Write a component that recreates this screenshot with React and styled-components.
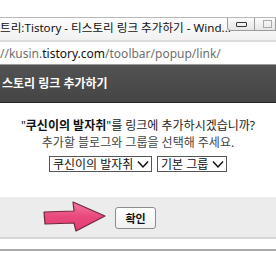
import React from 'react';
import styled, { createGlobalStyle } from 'styled-components';

const GlobalStyle = createGlobalStyle`
  html, body {
    margin: 0;
    padding: 0;
    background: #ffffff;
  }
  body {
    width: 276px;
    height: 260px;
    overflow: hidden;
    font-family: "Noto Sans", "Noto Sans CJK KR", sans-serif;
  }
`;

const Page = styled.div`
  display: flex;
  flex-direction: column;
  width: 276px;
  height: 260px;
  padding-top: 17px;
  box-sizing: border-box;
  background: #fff;
`;

const TitleBar = styled.div`
  display: flex;
  align-items: flex-start;
  height: 23px;
  border-top: 1px solid #b9b9b9;
  background: linear-gradient(#fdfdfd, #f1f1f1);
  box-sizing: border-box;
`;

const TitleText = styled.div`
  flex: 1;
  min-width: 0;
  font-size: 11.6px;
  line-height: 17px;
  padding-top: 1px;
  color: #111;
  white-space: nowrap;
`;

const WinButtons = styled.div`
  display: flex;
  height: 13px;
`;

const WinButton = styled.div`
  display: flex;
  align-items: center;
  justify-content: center;
  width: ${p => p.$w}px;
  height: 12px;
  border: 1px solid #9a9a9a;
  border-top: none;
  border-left-width: ${p => (p.$first ? 1 : 0)}px;
  border-radius: ${p => (p.$first ? '0 0 0 4px' : '0')};
  background: linear-gradient(#fbfbfb, #e6e6e6);
`;

const MinGlyph = styled.div`
  width: 9px;
  height: 3px;
  border: 1px solid #333;
  border-radius: 1px;
`;

const RestoreGlyph = styled.div`
  width: 7px;
  height: 6px;
  border: 1px solid #aaa;
  margin-left: 4px;
`;

const AddressBar = styled.div`
  display: flex;
  align-items: center;
  height: 25px;
  border-top: 2px solid #dcdcdc;
  border-bottom: 1px solid #9c9c9c;
  box-sizing: border-box;
  background: #fff;
  font-size: 12px;
  color: #6f6f6f;
  white-space: nowrap;
`;

const Domain = styled.span`
  color: #111;
`;

const Header = styled.div`
  display: flex;
  align-items: center;
  height: 38px;
  padding: 0 0 2px 2px;
  box-sizing: border-box;
  background: linear-gradient(#525252, #454545);
  border-bottom: 1px solid #262626;
  color: #fff;
  font-size: 12px;
  font-weight: 700;
  white-space: nowrap;
`;

const Content = styled.div`
  display: flex;
  flex-direction: column;
  align-items: center;
  height: 94px;
  padding-top: 14px;
  box-sizing: border-box;
  background: #fff;
  font-size: 12px;
`;

const Line = styled.div`
  line-height: 17px;
  white-space: nowrap;
  color: ${p => (p.$muted ? '#444' : '#222')};
`;

const Strong = styled.b`
  color: #111;
`;

const SelectRow = styled.div`
  display: flex;
  gap: 5px;
  margin-top: 5px;
`;

const FakeSelect = styled.div`
  display: flex;
  align-items: center;
  justify-content: space-between;
  width: ${p => p.$w}px;
  height: 16px;
  padding: 0 2px 0 3px;
  box-sizing: border-box;
  border: 1px solid #555;
  font-size: 12px;
  color: #111;
  white-space: nowrap;
`;

const Footer = styled.div`
  display: flex;
  align-items: center;
  gap: 8px;
  height: 42px;
  padding: 0 0 0 43px;
  box-sizing: border-box;
  background: #ececec;
  border-bottom: 2px solid #d6d6d6;
`;

const OkButton = styled.button`
  width: 41px;
  height: 22px;
  margin-top: 2px;
  padding: 0;
  border: 1px solid #8d8d8d;
  border-radius: 3px;
  background: linear-gradient(#ffffff, #f1f1f1);
  font-family: "Noto Sans CJK KR", sans-serif;
  font-size: 11px;
  font-weight: 700;
  color: #111;
`;

const BottomGap = styled.div`
  height: 10px;
  background: #fff;
  border-bottom: 2px solid #a9a9a9;
`;

const Chevron = () => (
  <svg width="12" height="9" viewBox="0 0 12 9">
    <path d="M1 1.5 L6 7 L11 1.5" fill="none" stroke="#111" strokeWidth="1.5" />
  </svg>
);

const Arrow = () => (
  <svg width="64" height="32" viewBox="0 0 64 32">
    <defs>
      <linearGradient id="pink" x1="0" y1="0" x2="0" y2="1">
        <stop offset="0" stopColor="#f27aa2" />
        <stop offset="0.5" stopColor="#e9497c" />
        <stop offset="1" stopColor="#e23d72" />
      </linearGradient>
    </defs>
    <path
      d="M1 11 L31 10 L30 1 L62 15 L33 30 L31 22 L2 23 Z"
      fill="url(#pink)"
      stroke="#6e2a3c"
      strokeWidth="1.2"
      strokeLinejoin="round"
    />
  </svg>
);

export default function App() {
  return (
    <>
      <GlobalStyle />
      <Page>
        <TitleBar>
          <TitleText>트리:Tistory - 티스토리 링크 추가하기 - Wind...</TitleText>
          <WinButtons>
            <WinButton $w={26} $first>
              <MinGlyph />
            </WinButton>
            <WinButton $w={20}>
              <RestoreGlyph />
            </WinButton>
          </WinButtons>
        </TitleBar>
        <AddressBar>
          <span>//kusin.<Domain>tistory.com</Domain>/toolbar/popup/link/</span>
        </AddressBar>
        <Header>스토리 링크 추가하기</Header>
        <Content>
          <Line>"<Strong>쿠신이의 발자취</Strong>"를 링크에 추가하시겠습니까?</Line>
          <Line $muted>추가할 블로그와 그룹을 선택해 주세요.</Line>
          <SelectRow>
            <FakeSelect $w={103}>쿠신이의 발자취 <Chevron /></FakeSelect>
            <FakeSelect $w={70}>기본 그룹 <Chevron /></FakeSelect>
          </SelectRow>
        </Content>
        <Footer>
          <Arrow />
          <OkButton>확인</OkButton>
        </Footer>
        <BottomGap />
      </Page>
    </>
  );
}
